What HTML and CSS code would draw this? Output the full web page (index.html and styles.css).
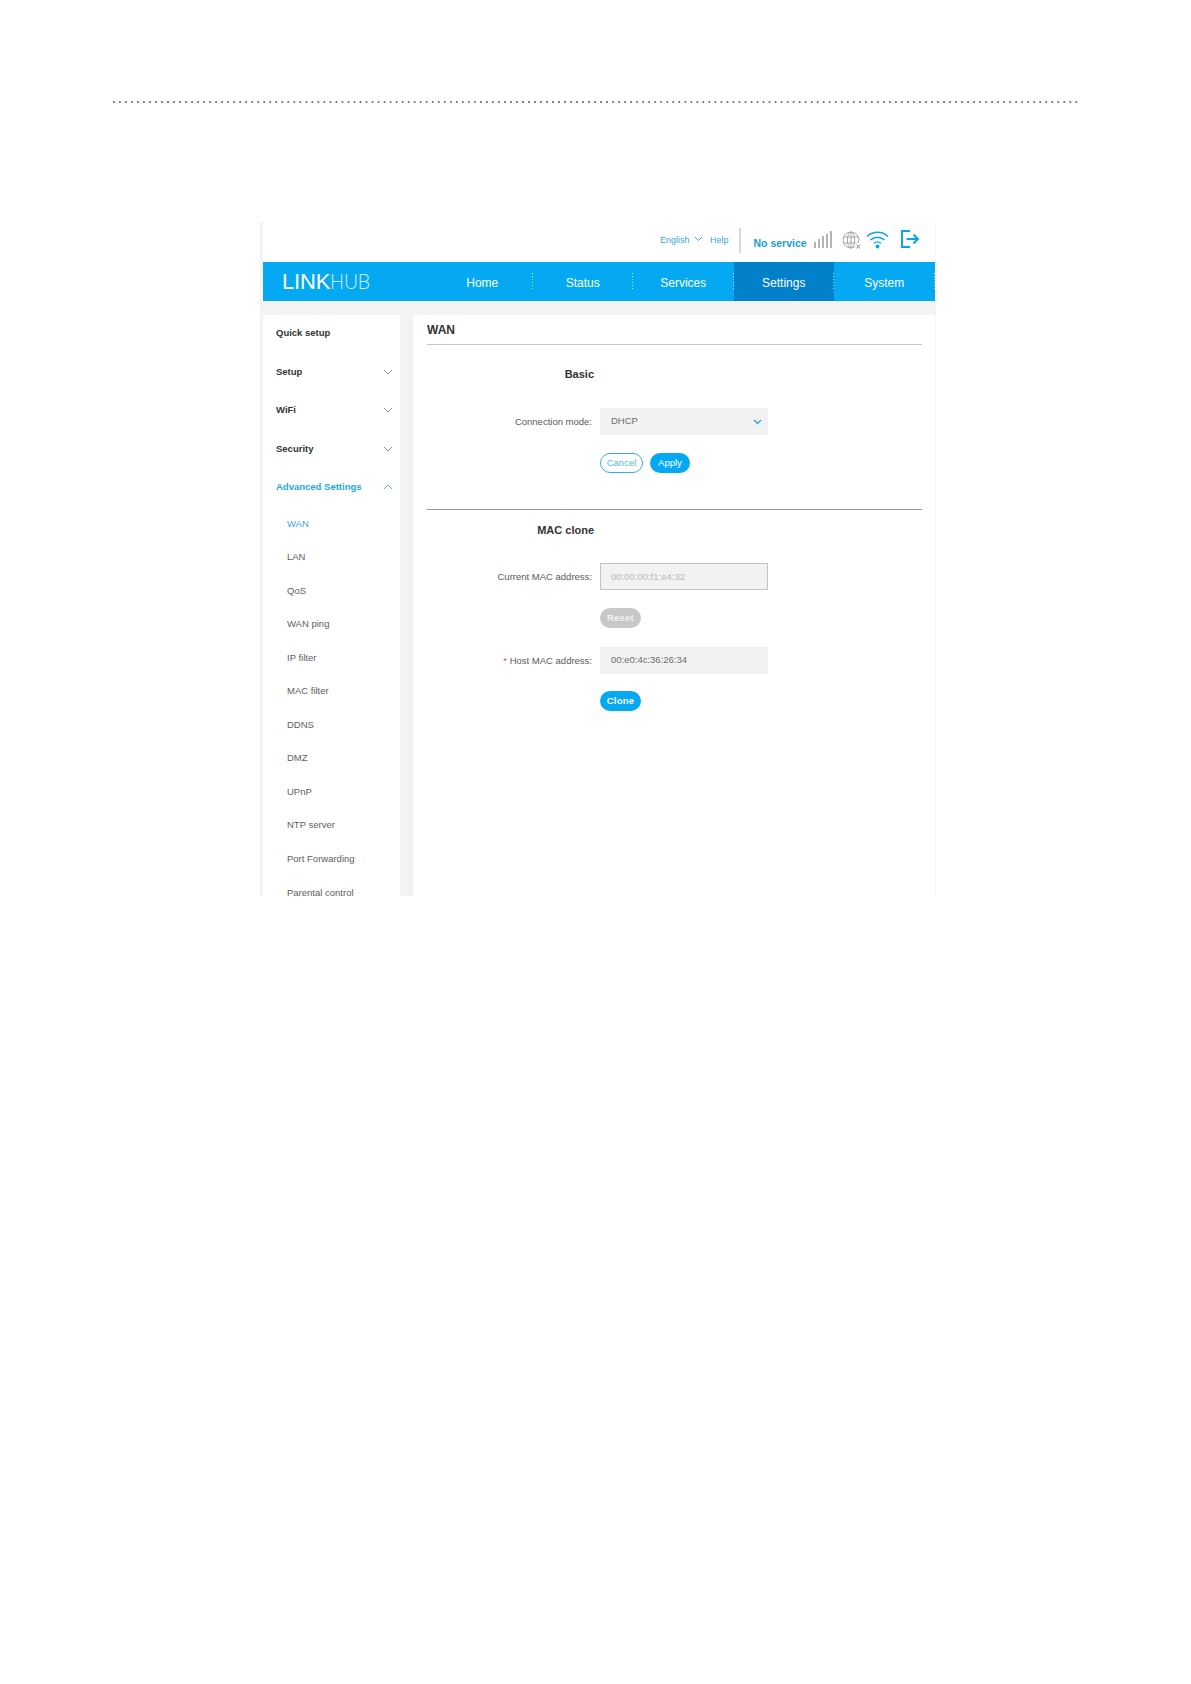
FILE: index.html
```html
<!DOCTYPE html>
<html lang="en">
<head>
<meta charset="utf-8">
<title>WAN</title>
<link rel="stylesheet" href="styles.css">
</head>
<body>
<div class="dots"></div>
<div class="frame">
  <div class="topbar">
    <a class="lang">English <svg class="lang-chev" width="9" height="6" viewBox="0 0 9 6"><path d="M1 1l3.5 3.5L8 1" fill="none" stroke="#3ea6dc" stroke-width="1"/></svg></a>
    <a class="help">Help</a>
    <span class="vsep"></span>
    <span class="noservice">No service</span>
    <svg class="ic-signal" width="20" height="18" viewBox="0 0 20 18"><g fill="#b4b4b4"><rect x="0" y="11" width="2" height="6"/><rect x="4" y="8" width="2" height="9"/><rect x="8" y="5" width="2" height="12"/><rect x="12" y="3" width="2" height="14"/><rect x="16" y="0" width="2" height="17"/></g></svg>
    <svg class="ic-globe" width="20" height="19" viewBox="0 0 20 19"><g fill="none" stroke="#a6a6a6" stroke-width="1"><circle cx="9" cy="9" r="8"/><ellipse cx="9" cy="9" rx="3.6" ry="8"/><path d="M9 1v16M1.6 6h14.8M1.6 12h14.8"/></g><path d="M13.5 12.5l5 5.5M18.5 12.5l-5 5.5" stroke="#fff" stroke-width="3.4"/><path d="M14.5 13.5l3.5 4M18 13.500l-3.500 4" stroke="#8a8a8a" stroke-width="1"/></svg>
    <svg class="ic-wifi" width="23" height="19" viewBox="0 0 23 19"><g fill="none" stroke="#0aa5e6" stroke-width="1.500"><path d="M1 6.500C7 .8 16 .8 22 6.500"/><path d="M4.500 10c4-3.800 10-3.800 14 0"/><path d="M8 13.300c2-1.800 5-1.800 7 0"/></g><circle cx="11.500" cy="16.500" r="1.900" fill="#0aa5e6"/></svg>
    <svg class="ic-exit" width="19" height="18" viewBox="0 0 19 18"><g fill="none" stroke="#0aa5e6" stroke-width="2"><path d="M9 1H1v16h8"/><path d="M5.500 9H17"/><path d="M12.500 4.500L17 9l-4.500 4.500"/></g></svg>
  </div>
  <header class="navbar">
    <div class="logo"><span class="logo-a">LINK</span><span class="logo-b">HUB</span></div>
    <nav class="nav">
      <a class="nav-item">Home</a>
      <a class="nav-item">Status</a>
      <a class="nav-item">Services</a>
      <a class="nav-item active">Settings</a>
      <a class="nav-item">System</a>
    </nav>
  </header>
  <div class="body">
    <aside class="side">
      <div class="s-item">Quick setup</div>
      <div class="s-item">Setup<svg class="chev" width="10" height="6" viewBox="0 0 10 6"><path d="M1 1l4 4 4-4" fill="none" stroke="#8f8f8f"/></svg></div>
      <div class="s-item">WiFi<svg class="chev" width="10" height="6" viewBox="0 0 10 6"><path d="M1 1l4 4 4-4" fill="none" stroke="#8f8f8f"/></svg></div>
      <div class="s-item">Security<svg class="chev" width="10" height="6" viewBox="0 0 10 6"><path d="M1 1l4 4 4-4" fill="none" stroke="#8f8f8f"/></svg></div>
      <div class="s-item on">Advanced Settings<svg class="chev" width="10" height="6" viewBox="0 0 10 6"><path d="M1 5l4-4 4 4" fill="none" stroke="#55b4e6"/></svg></div>
      <div class="sub on">WAN</div>
      <div class="sub">LAN</div>
      <div class="sub">QoS</div>
      <div class="sub">WAN ping</div>
      <div class="sub">IP filter</div>
      <div class="sub">MAC filter</div>
      <div class="sub">DDNS</div>
      <div class="sub">DMZ</div>
      <div class="sub">UPnP</div>
      <div class="sub">NTP server</div>
      <div class="sub">Port Forwarding</div>
      <div class="sub">Parental control</div>
    </aside>
    <main class="main">
      <h1 class="title">WAN</h1>
      <section class="basic">
        <div class="row head"><span class="lbl strong">Basic</span></div>
        <div class="row r-mode"><span class="lbl">Connection mode:</span>
          <div class="field">DHCP<svg class="sel-chev" width="9" height="6" viewBox="0 0 9 6"><path d="M1 1l3.500 3.500L8 1" fill="none" stroke="#2aa5e0" stroke-width="1.300"/></svg></div>
        </div>
        <div class="row r-btn"><span class="lbl"></span>
          <button class="btn ghost">Cancel</button><button class="btn solid apply">Apply</button>
        </div>
      </section>
      <section class="clone">
        <div class="row head2"><span class="lbl strong">MAC clone</span></div>
        <div class="row r-cur"><span class="lbl">Current MAC address:</span>
          <div class="field dis">00:00:00:f1:e4:32</div>
        </div>
        <div class="row r-reset"><span class="lbl"></span><button class="btn off bold">Reset</button></div>
        <div class="row r-host"><span class="lbl"><i class="req">*</i> Host MAC address:</span>
          <div class="field">00:e0:4c:36:26:34</div>
        </div>
        <div class="row r-clone"><span class="lbl"></span><button class="btn solid bold">Clone</button></div>
      </section>
    </main>
  </div>
</div>
</body>
</html>
```
FILE: styles.css
```css
* { box-sizing: border-box; }
html, body { margin: 0; padding: 0; background: #fff; }
body { font-family: "Liberation Sans", Arial, sans-serif; height: 1684px; overflow: hidden; }

.dots {
  height: 2px;
  margin: 101px 110px 0 113px;
  background-image: radial-gradient(circle at 1px 1px, #777 0.8px, transparent 1.1px);
  background-size: 6.02px 2px;
  background-repeat: repeat-x;
}

.frame {
  width: 676px;
  height: 674px;
  margin: 119px 0 0 260px;
  padding: 0 1px 0 3px;
  background: #f3f3f3;
  overflow: hidden;
}

.topbar {
  height: 40px;
  background: #fff;
  display: flex;
  align-items: flex-start;
  font-size: 9px;
  color: #3ea6dc;
}
.lang { margin: 13px 0 0 397px; width: 50px; white-space: nowrap; }
.lang-chev { margin-left: 2px; vertical-align: 1px; }
.help { margin-top: 13px; width: 29px; }
.vsep { width: 1.500px; height: 25px; margin-top: 6px; background: #d8d8d8; }
.noservice { margin: 15px 0 0 13px; width: 60px; font-size: 10.500px; font-weight: 700; color: #1a9bdc; white-space: nowrap; }
.ic-signal { margin-top: 9px; flex: none; }
.ic-globe { margin: 9px 0 0 8px; flex: none; }
.ic-wifi { margin: 8px 0 0 4px; flex: none; }
.ic-exit { margin: 8px 0 0 12px; flex: none; }

.navbar {
  height: 39px;
  background: #04a9f1;
  display: flex;
  align-items: stretch;
  color: #fff;
}
.logo { width: 169px; padding-left: 19px; font-size: 22px; line-height: 39px; white-space: nowrap; letter-spacing: -0.200px; }
.logo-b { opacity: .8; font-family: "Open Sans", "Liberation Sans", sans-serif; font-weight: 300; font-size: 19.500px; }
.nav { display: flex; }
.nav-item {
  width: 100.500px;
  font-size: 12px;
  line-height: 42px;
  text-align: center;
  position: relative;
}
.nav-item::after {
  content: "";
  position: absolute;
  right: 0;
  top: 11px;
  width: 1px;
  height: 18px;
  background-image: repeating-linear-gradient(to bottom, rgba(255,255,255,.7) 0 1px, transparent 1px 3px);
}
.nav-item.active { background: #0280ca; }

.body { display: flex; margin-top: 14px; height: 581px; }
.side { width: 137px; background: #fff; flex: none; overflow: hidden; }
.s-item {
  height: 38.500px;
  line-height: 36.500px;
  padding-left: 13px;
  font-size: 9.500px;
  font-weight: 700;
  color: #333;
  position: relative;
}
.s-item.on { color: #1da7e8; }
.chev { position: absolute; right: 7px; top: 15px; }
.sub {
  height: 33.560px;
  line-height: 32px;
  padding-left: 24px;
  font-size: 9.500px;
  color: #5e5e5e;
  white-space: nowrap;
}
.sub.on { color: #3ea6dc; }

.main { flex: none; width: 522px; margin-left: 13px; background: #fff; padding: 0 13px 0 14px; }
.title {
  margin: 0;
  height: 30px;
  font-size: 12px;
  font-weight: 700;
  line-height: 30px;
  color: #333;
  border-bottom: 1px solid #c6c6c6;
}
.row { display: flex; align-items: center; font-size: 9.500px; color: #5a5a5a; }
.lbl { width: 165px; flex: none; text-align: right; white-space: nowrap; }
.lbl.strong { width: 167px; font-size: 11px; font-weight: 700; color: #333; }
.req { color: #d9534f; font-style: normal; }

.basic { height: 145px; border-bottom: 1px solid #9d9d9d; }
.head { height: 18px; margin-top: 20px; }
.r-mode { margin-top: 25px; }
.r-btn { margin-top: 18px; }
.head2 { height: 18px; margin-top: 11px; }
.r-cur { margin-top: 24px; }
.r-reset { margin-top: 18px; }
.r-host { margin-top: 19px; }
.r-clone { margin-top: 17px; }

.field {
  width: 168px;
  height: 27px;
  margin-left: 8px;
  padding-left: 11px;
  background: #f2f2f2;
  line-height: 25px;
  font-size: 9.500px;
  color: #6c6c6c;
  position: relative;
}
.field.dis { border: 1px solid #c2c2c2; padding-left: 10px; color: #b9b9b9; line-height: 25px; }
.sel-chev { position: absolute; right: 6px; top: 11px; }

.btn {
  height: 20px;
  border-radius: 10px;
  border: 1px solid transparent;
  padding: 0;
  font-family: inherit;
  font-size: 9.500px;
  line-height: 18px;
  background: none;
  flex: none;
}
.btn.bold { width: 41px; margin-left: 8px; font-weight: 700; letter-spacing: .2px; }
.btn.ghost { width: 43px; margin-left: 8px; border-color: #35aee6; color: #5bb8e6; }
.btn.solid { background: #04a9f1; color: #fff; }
.btn.apply { width: 40px; margin-left: 7px; }
.btn.off { background: #c8c8c8; color: #f2f2f2; }
```
